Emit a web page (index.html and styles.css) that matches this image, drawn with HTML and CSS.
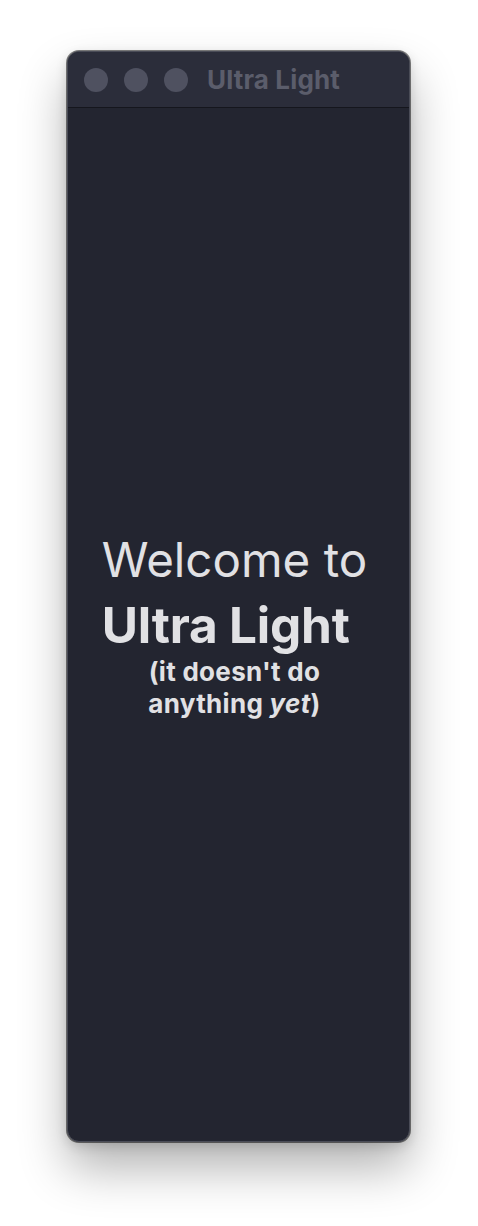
FILE: index.html
```html
<!DOCTYPE html>
<html>
<head>
<meta charset="utf-8">
<link rel="stylesheet" href="styles.css">
</head>
<body>
<div class="window">
  <div class="titlebar">
    <span class="light"></span>
    <span class="light"></span>
    <span class="light"></span>
    <span class="title">Ultra Light</span>
  </div>
  <div class="content">
    <div class="hero">
      <h1 class="heading"><span class="welcome">Welcome to</span><span class="brand">Ultra Light</span></h1>
      <p class="note">(it doesn't do<br>anything <em>yet</em>)</p>
    </div>
  </div>
</div>
</body>
</html>
```
FILE: styles.css
```css
html, body {
  margin: 0;
  padding: 0;
  background: #ffffff;
}
html {
  height: 1226px;
}
body {
  box-sizing: border-box;
  height: 1226px;
  padding: 51px 0 0 67px;
  font-family: Inter, "Noto Sans", sans-serif;
}
.window {
  width: 343px;
  height: 1091px;
  box-sizing: border-box;
  border-radius: 12px;
  background: #232530;
  border: 1px solid #4a4c57;
  box-shadow: 0 0 0 1px rgba(0,0,0,0.5), 0 26px 48px rgba(0,0,0,0.30), 0 4px 12px rgba(0,0,0,0.15);
  display: flex;
  flex-direction: column;
  overflow: hidden;
}
.titlebar {
  height: 56px;
  flex: none;
  background: #2b2d3a;
  border-bottom: 1px solid #15161d;
  display: flex;
  align-items: center;
  padding-left: 16px;
  box-sizing: border-box;
  gap: 16px;
}
.light {
  width: 24px;
  height: 24px;
  border-radius: 50%;
  background: #4f5160;
  flex: none;
}
.title {
  color: #5b5d6b;
  font-weight: 700;
  font-size: 26px;
  margin-left: 3px;
  letter-spacing: 0.15px;
}
.content {
  flex: 1;
  display: flex;
  align-items: center;
  justify-content: center;
  padding-bottom: 1px;
}
.hero {
  display: flex;
  flex-direction: column;
  align-items: center;
  color: #e1e1e4;
  margin-right: 8px;
}
.heading {
  margin: 0;
  display: flex;
  flex-direction: column;
  align-items: flex-start;
  font-weight: 400;
}
.welcome {
  font-size: 47.5px;
  font-weight: 400;
  line-height: 64px;
}
.brand {
  font-size: 49.5px;
  font-weight: 700;
  line-height: 66px;
  letter-spacing: -0.2px;
}
.note {
  margin: -2px 0 0;
  text-align: center;
  font-size: 26px;
  font-weight: 700;
  line-height: 32px;
  letter-spacing: 0.3px;
}
.note em {
  font-style: italic;
}
```
